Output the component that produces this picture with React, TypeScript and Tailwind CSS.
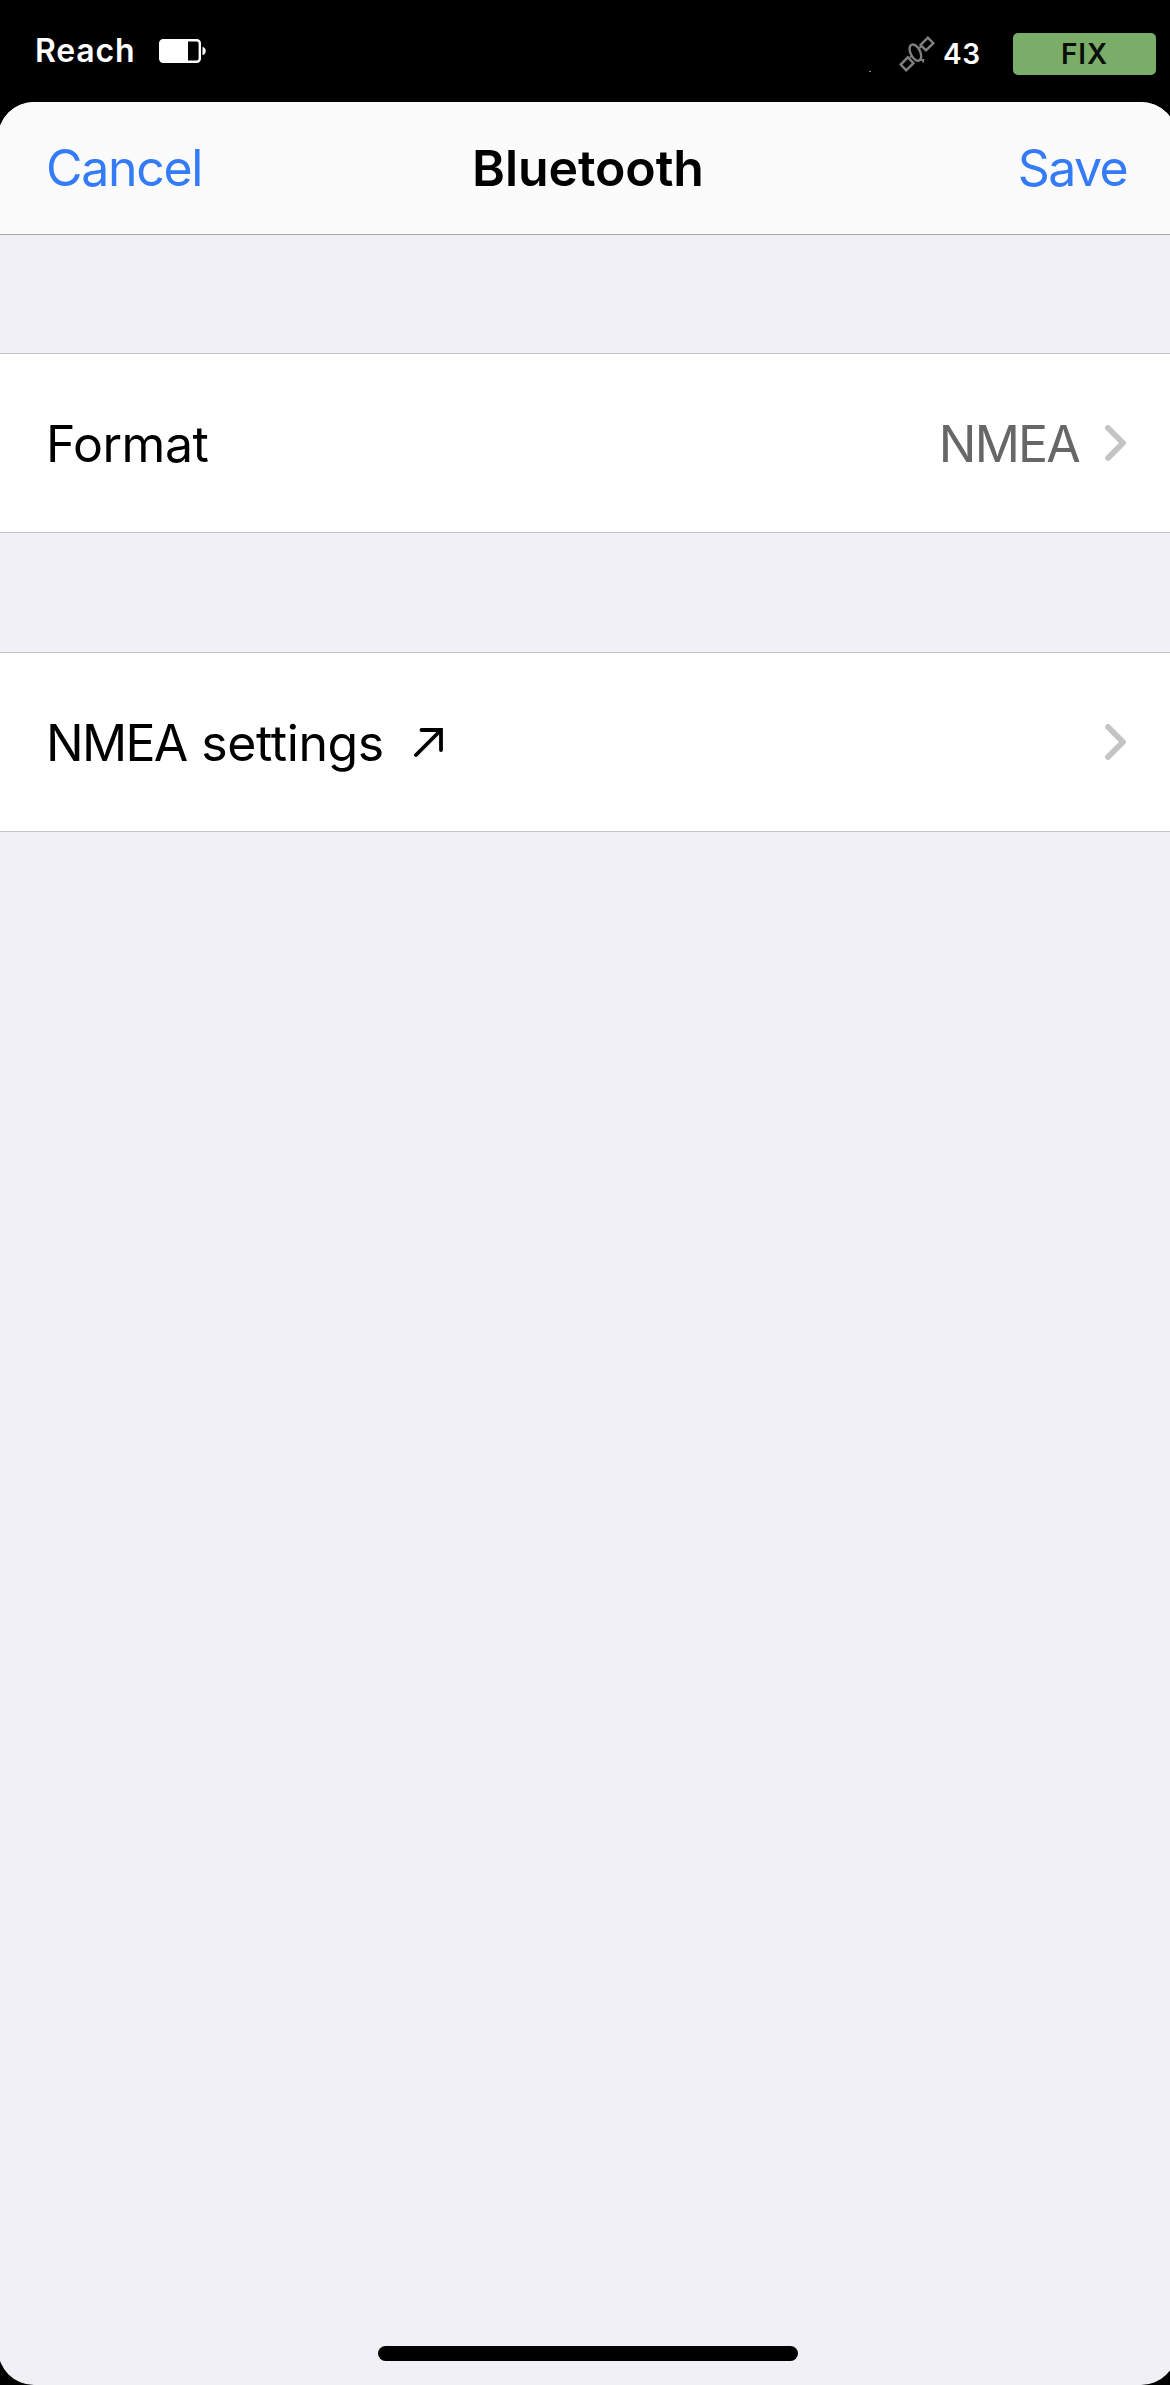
import React from "react";

function BatteryIcon() {
  return (
    <svg className="block h-6 w-12" viewBox="0 0 48 24" fill="none">
      <rect x="1.200" y="1.200" width="39.600" height="21.600" rx="3" stroke="#fff" strokeWidth="2.400" />
      <path d="M2 2h27v20H2z" fill="#fff" />
      <path d="M43.500 7.800c2.200.6 3.200 2.200 3.200 4.200s-1 3.600-3.200 4.200z" fill="#fff" />
    </svg>
  );
}

function SatelliteIcon() {
  return (
    <svg className="block h-9 w-9" viewBox="0 0 36 36" fill="none" stroke="#808080" strokeWidth="2.400">
      <path d="M28.800 1.700 L34.300 7.200 L27 14.400 L21.600 9 Z" />
      <path d="M8.800 21.300 L14.500 27.200 L7.200 34.300 L1.700 28.600 Z" />
      <ellipse cx="16.400" cy="16.600" rx="4.800" ry="8.800" transform="rotate(-27 16.400 16.600)" />
      <path d="M11 21.500l2-2M20.500 12l2-2M20 23.500l4.800.8M24.200 23v3.500" strokeWidth="2" />
    </svg>
  );
}

function Chevron() {
  return (
    <svg className="block h-9 w-[21px]" viewBox="0 0 21 36" fill="none">
      <path d="M3 3l15 15L3 33" stroke="#c4c4c4" strokeWidth="5.800" strokeLinecap="round" strokeLinejoin="round" />
    </svg>
  );
}

function ArrowIcon() {
  return (
    <svg className="block h-[29px] w-[29px]" viewBox="0 0 29 29" fill="none" stroke="#000" strokeWidth="3.800" strokeLinecap="round">
      <path d="M2 27L26.500 2.500M7.500 2H27V22" />
    </svg>
  );
}

export default function App() {
  return (
    <div className="flex h-[2385px] w-[1170px] flex-col overflow-hidden bg-black font-['Inter',sans-serif] text-black">
      <header className="flex h-[102px] shrink-0 items-start justify-between pl-[35px] pr-[14px] text-white">
        <div className="flex h-[102px] items-center">
          <span className="w-[99px] whitespace-nowrap text-[32px] font-[560] tracking-[0.8px]">Reach</span>
          <span className="ml-[25px]"><BatteryIcon /></span>
        </div>
        <div className="flex pt-[33px]">
          <span className="mr-[28px] mt-[38px] h-px w-[2px] bg-[#858585]" />
          <div className="pt-[3px]"><SatelliteIcon /></div>
          <span className="ml-2 mr-[32px] text-[28px] font-semibold leading-[43px] tracking-[0.8px]">43</span>
          <div className="flex h-[42px] w-[143px] items-center justify-center rounded-[5px] bg-[#7aad68] text-[28px] font-[580] tracking-[0.9px] text-[#0a0f08]">FIX</div>
        </div>
      </header>
      <main className="-ml-[2px] flex w-[1179px] flex-1 flex-col overflow-hidden rounded-[36px] bg-[#f1f0f6] pl-[2px] pr-[7px]">
        <nav className="-ml-[2px] -mr-[7px] grid h-[133px] shrink-0 grid-cols-3 items-center border-b border-[#a7a7aa] bg-[#fbfbfb] pl-[48px] pr-[50px] text-[50px]">
          <button className="text-left tracking-[-1.3px] text-[#347bf8]">Cancel</button>
          <h1 className="pl-[3px] text-center font-semibold tracking-[-0.1px]">Bluetooth</h1>
          <button className="text-right tracking-[-1.6px] text-[#347bf8]">Save</button>
        </nav>
        <section className="mt-[118px] flex h-[180px] shrink-0 items-center justify-between border-y border-[#c3c3c7] bg-white pl-[46px] pr-[44px] text-[50px]">
          <span className="pt-[2px] tracking-[-0.5px]">Format</span>
          <div className="flex items-center">
            <span className="mr-[26px] pt-[2px] tracking-[-1.8px] text-[#676767]">NMEA</span>
            <Chevron />
          </div>
        </section>
        <section className="mt-[119px] flex h-[180px] shrink-0 items-center justify-between border-y border-[#c3c3c7] bg-white pl-[46px] pr-[44px] text-[50px]">
          <div className="flex items-center">
            <span className="pt-[2px] tracking-[-0.4px]"><span className="mr-px tracking-[-1.7px]">NMEA</span> settings</span>
            <span className="ml-[30px]"><ArrowIcon /></span>
          </div>
          <Chevron />
        </section>
        <div className="mb-6 ml-[378px] mt-auto h-[15px] w-[420px] shrink-0 rounded-full bg-black" />
      </main>
    </div>
  );
}
